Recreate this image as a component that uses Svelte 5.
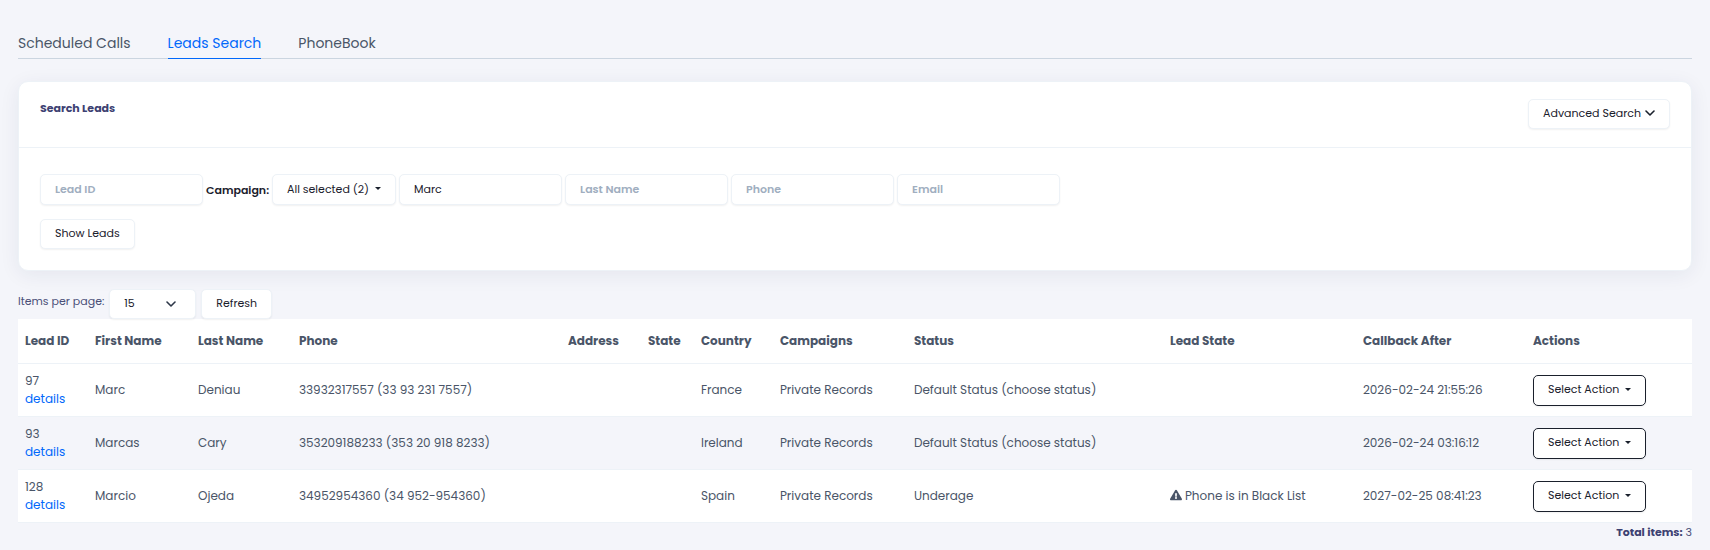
<script>
  const tabs = ['Scheduled Calls', 'Leads Search', 'PhoneBook'];
  let activeTab = $state('Leads Search');

  let leadId = $state('');
  let firstName = $state('Marc');
  let lastName = $state('');
  let phone = $state('');
  let email = $state('');
  let perPage = $state(15);

  // width is the column's share of the table
  const columns = [
    { label: 'Lead ID', width: 70 },
    { label: 'First Name', width: 103 },
    { label: 'Last Name', width: 101 },
    { label: 'Phone', width: 269 },
    { label: 'Address', width: 80 },
    { label: 'State', width: 53 },
    { label: 'Country', width: 79 },
    { label: 'Campaigns', width: 134 },
    { label: 'Status', width: 256 },
    { label: 'Lead State', width: 193 },
    { label: 'Callback After', width: 170 },
    { label: 'Actions', width: 166 }
  ];
  const totalWidth = columns.reduce((sum, c) => sum + c.width, 0);

  const leads = [
    {
      id: 97,
      first: 'Marc',
      last: 'Deniau',
      phone: '33932317557 (33 93 231 7557)',
      country: 'France',
      campaign: 'Private Records',
      status: 'Default Status (choose status)',
      leadState: '',
      callback: '2026-02-24 21:55:26'
    },
    {
      id: 93,
      first: 'Marcas',
      last: 'Cary',
      phone: '353209188233 (353 20 918 8233)',
      country: 'Ireland',
      campaign: 'Private Records',
      status: 'Default Status (choose status)',
      leadState: '',
      callback: '2026-02-24 03:16:12'
    },
    {
      id: 128,
      first: 'Marcio',
      last: 'Ojeda',
      phone: '34952954360 (34 952-954360)',
      country: 'Spain',
      campaign: 'Private Records',
      status: 'Underage',
      leadState: 'Phone is in Black List',
      callback: '2027-02-25 08:41:23'
    }
  ];
</script>

<main class="page">
  <nav class="tabs">
    {#each tabs as tab}
      <a
        href="#{tab.replace(' ', '-').toLowerCase()}"
        class="tab"
        class:active={tab === activeTab}
        onclick={() => (activeTab = tab)}>{tab}</a>
    {/each}
  </nav>

  <section class="card">
    <header class="card-header">
      <h2>Search Leads</h2>
      <button type="button" class="btn">
        Advanced Search
        <svg class="chevron" viewBox="0 0 10 10" aria-hidden="true"><path d="M1 3l4 4 4-4" /></svg>
      </button>
    </header>

    <form class="card-body" onsubmit={(e) => e.preventDefault()}>
      <div class="filters">
        <input class="field" placeholder="Lead ID" aria-label="Lead ID" bind:value={leadId} />
        <label class="campaign-label" for="campaign">Campaign:</label>
        <button type="button" id="campaign" class="btn campaign">
          All selected (2) <span class="caret"></span>
        </button>
        <input class="field" placeholder="First Name" aria-label="First Name" bind:value={firstName} />
        <input class="field" placeholder="Last Name" aria-label="Last Name" bind:value={lastName} />
        <input class="field" placeholder="Phone" aria-label="Phone" bind:value={phone} />
        <input class="field" placeholder="Email" aria-label="Email" bind:value={email} />
      </div>
      <button type="submit" class="btn">Show Leads</button>
    </form>
  </section>

  <div class="toolbar">
    <label for="per-page">Items per page:</label>
    <span class="select-wrap">
      <select id="per-page" class="btn per-page" bind:value={perPage}>
        <option value={15}>15</option>
        <option value={30}>30</option>
        <option value={50}>50</option>
      </select>
      <svg class="chevron" viewBox="0 0 10 10" aria-hidden="true"><path d="M1 3l4 4 4-4" /></svg>
    </span>
    <button type="button" class="btn">Refresh</button>
  </div>

  <table>
    <colgroup>
      {#each columns as col}
        <col style="width: {(col.width / totalWidth) * 100}%" />
      {/each}
    </colgroup>
    <thead>
      <tr>
        {#each columns as col}
          <th scope="col">{col.label}</th>
        {/each}
      </tr>
    </thead>
    <tbody>
      {#each leads as lead (lead.id)}
        <tr>
          <td>{lead.id}<br /><a href="#lead-{lead.id}">details</a></td>
          <td>{lead.first}</td>
          <td>{lead.last}</td>
          <td>{lead.phone}</td>
          <td></td>
          <td></td>
          <td>{lead.country}</td>
          <td>{lead.campaign}</td>
          <td>{lead.status}</td>
          <td>
            {#if lead.leadState}
              <svg class="warning" viewBox="0 0 576 512" aria-hidden="true">
                <path d="M569.5 440C588 472 564.800 512 527.900 512H48.100c-36.900 0-60-40.100-41.600-72L246.400 24c18.500-32 64.700-32 83.200 0l239.900 416zM288 354c-25.400 0-46 20.600-46 46s20.600 46 46 46 46-20.600 46-46-20.600-46-46-46zm-43.700-165.300l7.400 136c.3 6.400 5.600 11.300 12 11.300h48.500c6.400 0 11.600-5 12-11.300l7.400-136c.4-6.900-5.100-12.700-12-12.700h-63.400c-6.900 0-12.300 5.800-11.900 12.700z" />
              </svg>{lead.leadState}
            {/if}
          </td>
          <td>{lead.callback}</td>
          <td>
            <button type="button" class="btn action">Select Action <span class="caret"></span></button>
          </td>
        </tr>
      {/each}
    </tbody>
  </table>

  <p class="total"><strong>Total items:</strong> {leads.length}</p>
</main>

<style>
  :global(body) {
    background: #f4f5fa;
  }

  .page {
    padding: 32px 18px 0;
    font-family: Poppins, Inter, sans-serif;
    font-size: 11px;
    line-height: 18px;
    color: #4a5568;
  }

  .tabs {
    display: flex;
    gap: 37px;
    border-bottom: 1px solid #cbd5e0;
  }

  .tab {
    margin-bottom: -1px;
    padding-bottom: 4px;
    border-bottom: 1px solid transparent;
    font-size: 14px;
    line-height: 22px;
    color: #4a5568;
    text-decoration: none;
  }

  .tab.active {
    color: #0168fa;
    border-color: #0168fa;
  }

  .card {
    margin: 22px 0 18px;
    border: 1px solid #edf2f7;
    border-radius: 10px;
    background: #fff;
    box-shadow: 0 4px 20px rgba(30, 40, 80, 0.07);
  }

  .card-header {
    display: flex;
    justify-content: space-between;
    align-items: flex-start;
    padding: 17px 21px 18px;
    border-bottom: 1px solid #edf2f7;
  }

  h2 {
    margin: 0;
    font-size: 11px;
    line-height: 18px;
    font-weight: 700;
    color: #3d4172;
  }

  .card-body {
    padding: 26px 21px 21px;
  }

  .filters {
    display: flex;
    flex-wrap: wrap;
    align-items: center;
    gap: 3px;
    margin-bottom: 14px;
  }

  .btn,
  .field {
    box-sizing: border-box;
    height: 30px;
    padding: 0 14px 2px;
    border: 1px solid #edf2f7;
    border-radius: 5px;
    background: #fff;
    box-shadow: 0 1px 2px rgba(0, 0, 0, 0.06);
    font: inherit;
    color: #1a202c;
  }

  .btn {
    display: inline-flex;
    align-items: center;
    gap: 4px;
    cursor: pointer;
    white-space: nowrap;
  }

  .field {
    width: 163px;
    padding-bottom: 0;
  }

  .field,
  .campaign,
  .action {
    height: 31px;
  }

  .field::placeholder {
    font-weight: 600;
    color: #a0aec0;
    opacity: 1;
  }

  .campaign-label {
    font-weight: 600;
    color: #1a202c;
  }

  .caret {
    border: 3px solid transparent;
    border-top-color: currentColor;
    border-bottom: 0;
    margin-left: 2px;
  }

  .chevron {
    width: 10px;
    height: 10px;
    fill: none;
    stroke: currentColor;
    stroke-width: 1.6;
    stroke-linecap: round;
    stroke-linejoin: round;
  }

  .toolbar {
    display: flex;
    align-items: flex-start;
    gap: 5px;
    line-height: 24px;
    color: #4a4f78;
  }

  .select-wrap {
    display: inline-grid;
    align-items: center;
  }

  .select-wrap > * {
    grid-area: 1 / 1;
  }

  .select-wrap .chevron {
    justify-self: end;
    margin-right: 20px;
    color: #2d3748;
    pointer-events: none;
  }

  .per-page {
    width: 87px;
    appearance: none;
  }

  table {
    width: 100%;
    table-layout: fixed;
    border-collapse: collapse;
    background: #fff;
    font-size: 12px;
  }

  th,
  td {
    padding: 0 7px;
    border-bottom: 1px solid #edf2f7;
    text-align: left;
    vertical-align: middle;
    white-space: nowrap;
  }

  th {
    height: 44px;
    font-weight: 700;
  }

  td {
    height: 52px;
  }

  tbody tr:nth-child(even) {
    background: #f4f5fa;
  }

  td a {
    color: #0168fa;
    text-decoration: none;
  }

  .action {
    border-color: #1a202c;
    font-size: 11px;
    vertical-align: middle;
  }

  .warning {
    width: 12px;
    height: 12px;
    margin-right: 3px;
    fill: currentColor;
    vertical-align: -1px;
  }

  .total {
    margin: 0;
    text-align: right;
    color: #4a4f78;
  }

  .total strong {
    color: #3d4172;
  }
</style>
